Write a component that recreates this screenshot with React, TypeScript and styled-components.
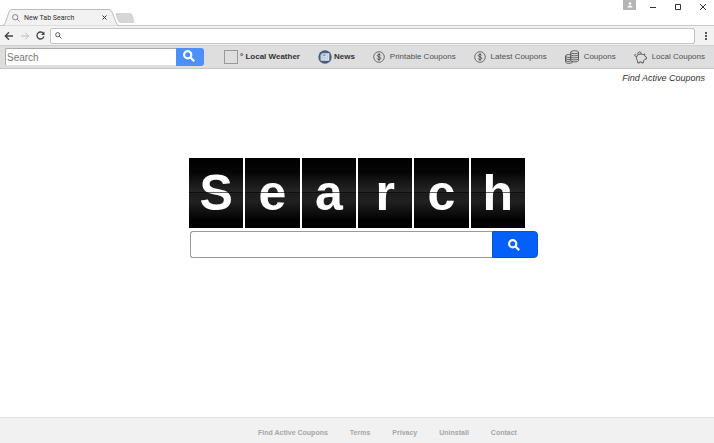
import React from "react";
import styled, { createGlobalStyle } from "styled-components";

const Global = createGlobalStyle`
  *, *::before, *::after { box-sizing: border-box; }
  body { margin: 0; background: #fff; font-family: "Liberation Sans", Arial, sans-serif; }
  button { padding: 0; border: 0; background: none; color: inherit; font: inherit; cursor: pointer; }
  svg { display: block; flex: none; }
`;

const Page = styled.div`
  display: flex;
  flex-direction: column;
  min-height: 100vh;
`;

const TitleBar = styled.header`
  display: flex;
  align-items: flex-end;
  height: 26px;
  padding-left: 2px;
  border-bottom: 1px solid #c9c9c9;
`;

const Tab = styled.div`
  position: relative;
  display: flex;
  align-items: center;
  width: 117px;
  height: 17px;
  margin-bottom: -1px;
  padding: 0 12px 0 10px;
  color: #333;
  font: 7px Roboto, sans-serif;
`;

const TabShape = styled.svg`
  position: absolute;
  inset: 0;
  width: 100%;
  height: 100%;
`;

const TabLabel = styled.span`
  position: relative;
  flex: 1;
  margin-left: 4px;
  white-space: nowrap;
`;

const TabIcon = styled.svg`
  position: relative;
`;

const TabClose = styled.button`
  position: relative;
`;

const NewTab = styled.button`
  margin: 0 auto 2px -4px;
`;

const WindowControls = styled.div`
  display: flex;
  align-self: flex-start;
  align-items: center;
  height: 14px;
  padding-right: 7px;
  gap: 17px;
  color: #333;
`;

const Profile = styled.button`
  display: grid;
  place-items: center;
  align-self: flex-start;
  width: 13px;
  height: 10px;
  margin-right: -4px;
  background: #b5b5b5;
`;

const AddressBar = styled.nav`
  display: flex;
  align-items: center;
  gap: 6px;
  height: 19px;
  padding: 0 5px 0 4px;
  background: #f2f2f2;
  color: #444;
`;

const Omnibox = styled.label`
  display: flex;
  align-items: center;
  flex: 1;
  height: 16px;
  margin: 0 2px 0 -1px;
  padding: 0 4px;
  gap: 4px;
  border: 1px solid #c4c4c4;
  border-radius: 2px;
  background: #fff;
`;

const OmniInput = styled.input`
  flex: 1;
  min-width: 0;
  padding: 0;
  border: 0;
  outline: 0;
  font: 8px Roboto, sans-serif;
`;

const Toolbar = styled.div`
  display: flex;
  align-items: center;
  height: 24px;
  padding: 0 9px 0 5px;
  border-top: 1px solid #d0d0d0;
  border-bottom: 1px solid #c6c6c6;
  background: #dedede;
`;

const MiniForm = styled.form`
  display: flex;
  flex: 0 0 199px;
  height: 18px;
`;

const MiniInput = styled.input`
  flex: 1;
  min-width: 0;
  padding: 0 1px;
  border: 1px solid #aaa;
  border-width: 1px 0 1px 1px;
  border-bottom-color: #ddd;
  border-radius: 2px 0 0 2px;
  outline: 0;
  background: #fff;
  font: 10px "Liberation Sans", Arial, sans-serif;
  &::placeholder { color: #777; opacity: 1; }
`;

const MiniButton = styled.button`
  display: grid;
  place-items: center;
  width: 28px;
  padding: 0 3px 2px 0;
  border-radius: 0 3px 3px 0;
  background: #4d8ffb;
  color: #fff;
`;

const ToolLinks = styled.div`
  display: flex;
  align-items: center;
  justify-content: space-between;
  flex: 1;
  margin-left: 20px;
`;

const ToolLink = styled.a<{ $bold?: boolean }>`
  display: flex;
  align-items: center;
  gap: ${(p) => (p.$bold ? 2 : 5)}px;
  color: ${(p) => (p.$bold ? "#333" : "#505050")};
  font-size: 8px;
  font-weight: ${(p) => (p.$bold ? 700 : 400)};
  line-height: 12px;
  text-decoration: none;
  white-space: nowrap;
`;

const WeatherBox = styled.span`
  width: 14px;
  height: 14px;
  border: 1px solid #999;
`;

const Main = styled.main`
  display: flex;
  flex: 1;
  flex-direction: column;
  align-items: center;
`;

const ActiveLink = styled.a`
  align-self: flex-end;
  margin: 3px 9px 0 0;
  color: #333;
  font-size: 9px;
  font-style: italic;
  line-height: 12px;
  text-decoration: none;
`;

const Hero = styled.div`
  width: 349px;
  max-width: 100%;
  margin: 74px 0 24px 13px;
`;

const Tiles = styled.h1`
  display: grid;
  grid-template-columns: repeat(6, 1fr);
  gap: 2px;
  margin: 0 13px 3px 0;
`;

const Tile = styled.span`
  position: relative;
  height: 70px;
  background: linear-gradient(#000, #060606 20%, #262626 49%, #1c1c1c 52%, #202020 62%, #030303 88%, #000);
  color: #fff;
  font-size: 50px;
  font-weight: 700;
  line-height: 70px;
  text-align: center;
  &::after {
    content: "";
    position: absolute;
    inset: 34px 0 auto;
    height: 1px;
    background: rgba(0, 0, 0, 0.6);
  }
`;

const MainForm = styled.form`
  display: flex;
  height: 27px;
  margin-left: 1px;
`;

const MainInput = styled.input`
  flex: 1;
  min-width: 0;
  padding: 0 8px;
  border: 1px solid #999;
  border-right: 0;
  border-radius: 3px 0 0 3px;
  outline: 0;
  font: 12px "Liberation Sans", Arial, sans-serif;
`;

const MainButton = styled.button`
  display: grid;
  place-items: center;
  width: 46px;
  padding-right: 3px;
  border: 1px solid #0c50cc;
  border-radius: 0 4px 4px 0;
  background: #0560fa;
  color: #fff;
`;

const Footer = styled.footer`
  display: flex;
  justify-content: center;
  align-items: center;
  gap: 22px;
  height: 26px;
  padding: 4px 0 0 61px;
  border-top: 1px solid #e2e2e2;
  background: #f1f1f1;
`;

const FooterLink = styled.a`
  color: #a6a6a6;
  font-size: 7px;
  font-weight: 700;
  line-height: 10px;
  text-decoration: none;
  white-space: nowrap;
`;

const Icon = styled.svg`
  fill: none;
  stroke: currentColor;
`;

const Faded = styled.button`
  opacity: 0.3;
`;

const Magnifier = ({ size, weight = 2.2 }: { size: number; weight?: number }) => (
  <Icon width={size} height={size} viewBox="0 0 12 12" strokeWidth={weight}>
    <circle cx="4.7" cy="4.7" r="3.6" />
    <path d="M7.3 7.3 11.2 11.2" />
  </Icon>
);

const Dollar = () => (
  <Icon width="12" height="12" viewBox="0 0 12 12" strokeWidth="0.8">
    <circle cx="6" cy="6" r="5.3" />
    <path strokeWidth="1" d="M7.8 4.4C7.4 3.6 6.8 3.4 6 3.4c-1 0-1.7.5-1.7 1.2C4.3 6.3 7.8 5.5 7.8 7.3c0 .8-.8 1.3-1.8 1.3-.9 0-1.6-.4-1.9-1.2M6 2.2v7.6" />
  </Icon>
);

const Coins = () => (
  <Icon width="14" height="14" viewBox="0 0 14 14" strokeWidth="0.9">
    <ellipse cx="9.6" cy="2.2" rx="3.9" ry="1.5" />
    <path d="M5.7 2.2v8.2c0 2 7.8 2 7.8 0V2.2M5.7 4.3c0 2 7.8 2 7.8 0M5.7 6.4c0 2 7.8 2 7.8 0M5.7 8.4c0 2 7.8 2 7.8 0" />
    <path d="M5.6 4.7C3 4.3.5 4.900.5 6v5.700c0 1.800 4.500 2.100 6.800.8V11.600M.5 6c0 1.400 3 1.800 5.200 1.200M.5 8c0 1.400 3 1.800 5.200 1.200M.5 9.900c0 1.400 3 1.800 5.200 1.200" />
  </Icon>
);

const Piggy = () => (
  <Icon width="13" height="13" viewBox="0 0 14 14" strokeWidth="1" strokeLinejoin="round">
    <path d="M2.900 6C3.200 4.700 4 4 5.300 3.600c1.700-.5 3.300-.3 4.600.4l1.700-.9-.2 2.200 1.900 1.300v2l-1.800.5-1.300 1.600-.2 2.200H8.200l-.4-1.200H6.200l-.4 1.200H4.100l-.4-2.600C2.800 9.200 2.500 7.900 2.900 6Z" />
    <path d="M2.800 5.800C1.500 6 .6 5.300.8 4.200c.1-.7 1.100-.8 1.300-.2M4.500 3.800C3.800 2.400 4.500 1 5.900 1c1.300 0 2 .9 1.900 2.300" />
  </Icon>
);

const NewsIcon = () => (
  <svg width="14" height="14" viewBox="0 0 13 13">
    <circle cx="6.5" cy="6.5" r="6.2" fill="#4a5d7c" />
    <path fill="#dce7f2" d="M2.400 4.200h1.200V3h6.900v7H3.400c-.6 0-1-.4-1-1Z" />
    <path fill="none" stroke="#8a9bb5" strokeWidth=".6" d="M3.700 4.300v4.800M5 6.800h2M5 8.300h2M8 4.500h1.500M8 6.200h1.500M8 8h1.500" />
    <path fill="#6f9bce" d="M4.700 4h2.300v1.500H4.700z" />
  </svg>
);

const links = [
  { label: "Printable Coupons", icon: <Dollar /> },
  { label: "Latest Coupons", icon: <Dollar /> },
  { label: "Coupons", icon: <Coins /> },
  { label: "Local Coupons", icon: <Piggy /> },
];

const footerLinks = ["Find Active Coupons", "Terms", "Privacy", "Uninstall", "Contact"];

const stay = (e: React.FormEvent) => e.preventDefault();

export default function App() {
  return (
    <Page>
      <Global />
      <TitleBar>
        <Tab>
          <TabShape viewBox="0 0 117 17" preserveAspectRatio="none">
            <path d="M0 16.5C3 16.5 3 14 4 11.5L7 3Q8 .5 10 .5H107Q109 .5 110 3L114 13Q115 16.5 117 16.5" fill="#f2f2f2" stroke="#bcbcbc" />
          </TabShape>
          <TabIcon width="8" height="8" viewBox="0 0 12 12" fill="none" stroke="#777" strokeWidth="1.3">
            <circle cx="4.8" cy="4.8" r="4" />
            <path d="m7.8 7.8 3.5 3.5" />
          </TabIcon>
          <TabLabel>New Tab Search</TabLabel>
          <TabClose aria-label="Close tab">
            <Icon width="5" height="5" viewBox="0 0 5 5"><path d="m.5.5 4 4m0-4-4 4" /></Icon>
          </TabClose>
        </Tab>
        <NewTab aria-label="New tab">
          <svg width="20" height="10" viewBox="0 0 20 10">
            <path d="M2 .5h13q1.5 0 2 1.5l2 6q.4 1.5-1 1.5H5.5Q4 9.5 3.4 8L1 2Q.5.5 2 .5Z" fill="#d6d6d6" stroke="#c6c6c6" strokeWidth=".6" />
          </svg>
        </NewTab>
        <WindowControls>
          <Profile aria-label="Profile">
            <svg width="6" height="6" viewBox="0 0 6 6" fill="#fff">
              <circle cx="3" cy="1.6" r="1.3" />
              <path d="M.5 5.5C.5 2.7 5.500 2.700 5.500 5.500Z" />
            </svg>
          </Profile>
          <button aria-label="Minimize"><Icon width="8" height="8" viewBox="0 0 8 8"><path d="M1 4.5h6" /></Icon></button>
          <button aria-label="Maximize"><Icon width="8" height="8" viewBox="0 0 8 8"><path d="M1.500 1.500h5v5h-5z" /></Icon></button>
          <button aria-label="Close window"><Icon width="8" height="8" viewBox="0 0 8 8"><path d="m1 1 6 6m0-6-6 6" /></Icon></button>
        </WindowControls>
      </TitleBar>
      <AddressBar>
        <button aria-label="Back">
          <Icon width="10" height="10" viewBox="0 0 10 10" strokeWidth="1.3"><path d="M9 5H1.500M5 1.300 1.300 5 5 8.700" /></Icon>
        </button>
        <Faded aria-label="Forward" disabled>
          <Icon width="10" height="10" viewBox="0 0 10 10"><path d="M1 5h7.500M5.500 1.800 8.700 5 5.500 8.200" /></Icon>
        </Faded>
        <button aria-label="Reload">
          <svg width="9" height="9" viewBox="0 0 9 9">
            <path d="M7.400 2.500A3.500 3.500 0 1 0 7.900 5.400" fill="none" stroke="#444" strokeWidth="1.3" />
            <path d="M8.500.4v3.500H5Z" fill="#444" />
          </svg>
        </button>
        <Omnibox>
          <Magnifier size={7} weight={1.5} />
          <OmniInput aria-label="Address" />
        </Omnibox>
        <button aria-label="Menu">
          <svg width="6" height="10" viewBox="0 0 6 10" fill="#555"><path d="M2 1h2v2H2zM2 4h2v2H2zM2 7h2v2H2z" /></svg>
        </button>
      </AddressBar>
      <Toolbar>
        <MiniForm onSubmit={stay}>
          <MiniInput aria-label="Search the web" placeholder="Search" />
          <MiniButton aria-label="Search"><Magnifier size={12} /></MiniButton>
        </MiniForm>
        <ToolLinks>
          <ToolLink href="#weather" $bold><WeatherBox />° Local Weather</ToolLink>
          <ToolLink href="#news" $bold><NewsIcon />News</ToolLink>
          {links.map((l) => (
            <ToolLink key={l.label} href="#coupons">{l.icon}{l.label}</ToolLink>
          ))}
        </ToolLinks>
      </Toolbar>
      <Main>
        <ActiveLink href="#active">Find Active Coupons</ActiveLink>
        <Hero>
          <Tiles aria-label="Search">
            {"Search".split("").map((c, i) => <Tile key={i}>{c}</Tile>)}
          </Tiles>
          <MainForm onSubmit={stay}>
            <MainInput aria-label="Search terms" />
            <MainButton aria-label="Search"><Magnifier size={12} /></MainButton>
          </MainForm>
        </Hero>
      </Main>
      <Footer>
        {footerLinks.map((t) => <FooterLink key={t} href="#footer">{t}</FooterLink>)}
      </Footer>
    </Page>
  );
}
